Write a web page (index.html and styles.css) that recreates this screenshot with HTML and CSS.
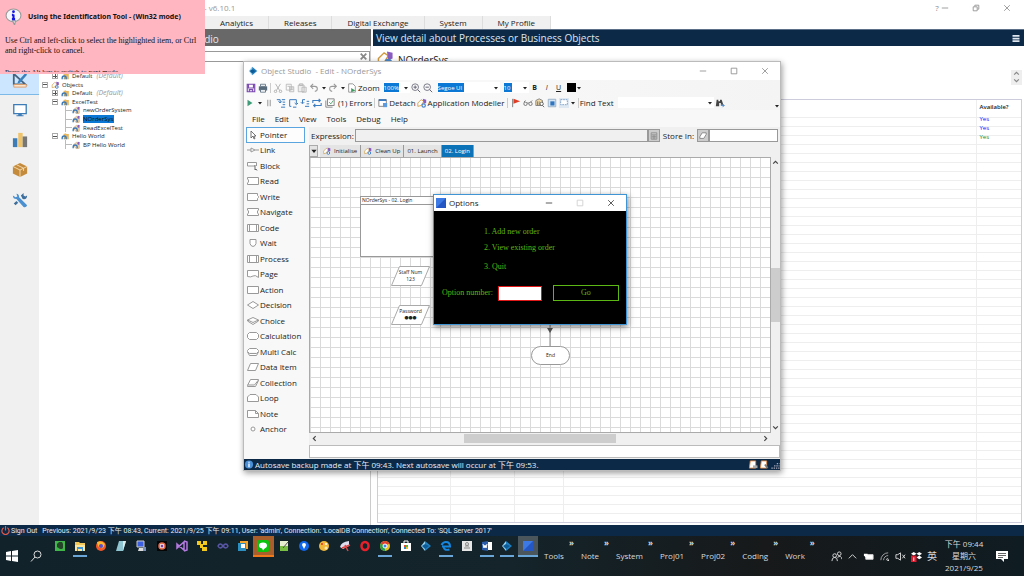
FILE: index.html
```html
<!DOCTYPE html>
<html lang="en">
<head>
    <meta charset="UTF-8">
    <meta name="viewport" content="width=device-width, initial-scale=1.0">
    <title>Object Studio - Edit - NOrderSys</title>
    <link rel="stylesheet" href="styles.css">
</head>
<body>
    <!-- shared icons -->
    <svg class="defs" width="0" height="0">
        <symbol id="prism" viewBox="0 0 12 12"><path d="M1 6 5 1v10z" fill="#8fd0f0"/><path d="M5 1l6 5-6 5z" fill="#1f7fc0"/><path d="M5 4l4 2-4 3-3-3z" fill="#0d5a94"/></symbol>
        <symbol id="gears" viewBox="0 0 12 12"><path d="M1 6l4-4 3 2-3 5-4 1z" fill="#fff" stroke="#d09a3c"/><path d="M7 1l4 1v4L8 7z" fill="#8a5cc0"/><circle cx="8" cy="9" r="2" fill="#fff" stroke="#4a86c8" stroke-width="1.5"/></symbol>
        <symbol id="folder" viewBox="0 0 12 12"><path d="M3 3l4-1v1h4v8H4z" fill="#e8b860"/><path d="M1 11V9q0-3 3-3t3 3v2" fill="none" stroke="#3878b8" stroke-width="2"/><path d="M4 8v3" stroke="#3878b8"/></symbol>
        <symbol id="leaf" viewBox="0 0 12 12"><path d="M1 6l5-4 4 2v7H5z" fill="#f2dcb4" stroke="#c8a070"/><path d="M8 1l3 1-1 4-3-1z" fill="#8a5cc0"/><path d="M1 11V9q0-3 3-3t3 3v2" fill="none" stroke="#3878b8" stroke-width="2"/></symbol>
        <symbol id="min" viewBox="0 0 10 10"><path d="M1 5h8" stroke="currentColor" fill="none"/></symbol>
        <symbol id="max" viewBox="0 0 10 10"><path d="M1.500 1.500h7v7h-7z" stroke="currentColor" fill="none"/></symbol>
        <symbol id="close" viewBox="0 0 10 10"><path d="M1.500 1.500l7 7m0-7l-7 7" stroke="currentColor" fill="none"/></symbol>
        <symbol id="down" viewBox="0 0 6 6"><path d="M1 2h4L3 4.500z" fill="currentColor"/></symbol>
    </svg>

    <main class="app">
        <header class="app-title">
            <span>Blue Prism - v6.10.1</span>
            <div class="win-buttons">
                <button class="help">?</button>
                <button aria-label="Minimise"><svg><use href="#min"/></svg></button>
                <button aria-label="Restore"><svg viewBox="0 0 10 10"><path d="M1.500 3.500h5v5h-5zM3.500 3V1.500h5v5H7" fill="none" stroke="currentColor"/></svg></button>
                <button aria-label="Close"><svg><use href="#close"/></svg></button>
            </div>
        </header>
        <nav class="app-tabs">
            <a href="#">Analytics</a>
            <a href="#">Releases</a>
            <a href="#">Digital Exchange</a>
            <a href="#">System</a>
            <a href="#">My Profile</a>
        </nav>
        <div class="app-main">
            <section class="left">
                <h2>Studio</h2>
                <div class="left-body">
                    <nav class="sidebar">
                        <a href="#" class="on" aria-label="Studio"><svg viewBox="0 0 18 18"><path d="M2 2v12h13z" fill="none" stroke="#46627c" stroke-width="2"/><path d="M15 1l2 2-8 9-3 1 1-3z" fill="#3a80bd"/><path d="M2 14h14v3H2z" fill="#fbe3cc" stroke="#dc9a66"/></svg></a>
                        <a href="#" aria-label="Control"><svg viewBox="0 0 18 18"><path d="M2 3h14v10H2z" fill="#fff" stroke="#3e7cb8" stroke-width="1.500"/><path d="M7 13h4v2h2v1H5v-1h2z" fill="#3e7cb8"/></svg></a>
                        <a href="#" aria-label="Analytics"><svg viewBox="0 0 18 18"><path d="M1 7h5v10H1z" fill="#3e7cb8"/><path d="M7 1h5v16H7z" fill="#efc36a"/><path d="M12 5h5v12h-5z" fill="#777"/></svg></a>
                        <a href="#" aria-label="Releases"><svg viewBox="0 0 18 18"><path d="M1 5l8-4 8 4v8l-8 4-8-4z" fill="#c58b3c"/><path d="M1 5l8 4 8-4M9 9v8M5 3l8 4v3" fill="none" stroke="#f6e0b8"/></svg></a>
                        <a href="#" aria-label="System"><svg viewBox="0 0 18 18"><path d="M1 4q0 4 4 4l8 9q3 1 4-2L8 6q0-4-3-4l1 3-2 1z" fill="#4a90d0"/><path d="M12 8l-2-4 3-3v3l2 1 2-1q0 5-5 4" fill="#3e6f9c"/><path d="M2 13l3-3 2 2-3 3z" fill="#3e6f9c"/></svg></a>
                    </nav>
                    <div class="explorer">
                        <div class="search">
                            <input type="text" aria-label="Search">
                            <button aria-label="Clear"><svg viewBox="0 0 10 10"><path d="M1 1l8 8m0-8L1 9" stroke="#888" stroke-width="2.500"/></svg></button>
                        </div>
                        <ul class="tree">
                            <li class="l1"><i class="box plus"></i><svg><use href="#folder"/></svg>Default <em>(Default)</em></li>
                            <li class="l0"><i class="box"></i><svg><use href="#gears"/></svg>Objects</li>
                            <li class="l1"><i class="box plus"></i><svg><use href="#folder"/></svg>Default <em>(Default)</em></li>
                            <li class="l1"><i class="box"></i><svg><use href="#folder"/></svg>ExcelTest</li>
                            <li class="l2"><svg><use href="#leaf"/></svg>newOrderSystem</li>
                            <li class="l2"><svg><use href="#leaf"/></svg><mark>NOrderSys</mark></li>
                            <li class="l2"><svg><use href="#leaf"/></svg>ReadExcelTest</li>
                            <li class="l1"><i class="box"></i><svg><use href="#folder"/></svg>Hello World</li>
                            <li class="l2"><svg><use href="#leaf"/></svg>BP Hello World</li>
                        </ul>
                    </div>
                </div>
            </section>
            <section class="right">
                <h2>View detail about Processes or Business Objects
                    <button aria-label="Menu"><svg viewBox="0 0 8 8"><path d="M0 1h8M0 4h8M0 7h8" stroke="#dfe6ee" stroke-width="2"/></svg></button>
                </h2>
                <div class="detail-head">
                    <svg><use href="#gears"/></svg>
                    <span>NOrderSys</span>
                    <div class="spin"><button aria-label="Up"><svg viewBox="0 0 6 6"><path d="M1 4l2-2 2 2" fill="none" stroke="#888"/></svg></button><button aria-label="Down"><svg viewBox="0 0 6 6"><path d="M1 2l2 2 2-2" fill="none" stroke="#888"/></svg></button></div>
                </div>
                <div class="detail-table">
                    <table>
                        <thead><tr><th class="c1"></th><th class="c2"></th><th class="c3"></th><th></th><th class="c5">Available?</th></tr></thead>
                        <tbody>
                            <tr><td></td><td></td><td></td><td></td><td class="blue">Yes</td></tr>
                            <tr><td></td><td></td><td></td><td></td><td class="blue">Yes</td></tr>
                            <tr><td></td><td></td><td></td><td></td><td class="green">Yes</td></tr>
                            <tr class="rest"><td></td><td></td><td></td><td></td><td></td></tr>
                        </tbody>
                    </table>
                </div>
            </section>
        </div>
    </main>

    <footer class="app-status">
        <svg viewBox="0 0 10 10"><path d="M3 2a4 4 0 1 0 4 0M5 0v5" fill="none" stroke="#e05a48" stroke-width="1.300"/></svg>
        <a href="#">Sign Out</a>
        <span>Previous: 2021/9/23 下午 08:43, Current: 2021/9/25 下午 09:11, User: 'admin', Connection: 'LocalDB Connection', Connected To: 'SQL Server 2017'</span>
    </footer>

    <footer class="taskbar">
        <button class="start" aria-label="Start"><svg viewBox="0 0 12 12"><path d="M0 2l5-1v4.500H0zM6 1l6-1v5.500H6zM0 6.500h5V11l-5-1zM6 6.500h6V12l-6-1z" fill="#fff"/></svg></button>
        <button class="find" aria-label="Search"><svg viewBox="0 0 12 12"><circle cx="7.500" cy="4.500" r="3.500" fill="none" stroke="#ddd"/><path d="M5 7l-4 4.500" stroke="#ddd"/></svg></button>
        <div class="apps">
            <button aria-label="Evernote"><svg viewBox="0 0 12 12"><path d="M1 1h10v10H1z" fill="#3fb54a"/><path d="M3 4l2-2h3l1 2v4L8 9H6L3 7z" fill="#26432a"/></svg></button>
            <button class="run" aria-label="Explorer"><svg viewBox="0 0 12 12"><path d="M1 2h4l1 1h5v8H1z" fill="#f2c85a"/><path d="M1 5h10v6H1z" fill="#fbe6a0"/><path d="M3 7h6v4H8V9H4v2H3z" fill="#3f94d4"/></svg></button>
            <button aria-label="Firefox"><svg viewBox="0 0 12 12"><circle cx="6" cy="6" r="5" fill="#f4572a"/><path d="M2 2q5-2 8 2l-2 4q-3 1-5-2z" fill="#ffb52e"/><circle cx="6" cy="6" r="2" fill="#5a4fd0"/></svg></button>
            <button aria-label="Notepad"><svg viewBox="0 0 12 12"><path d="M4 1h7L8 11H1z" fill="#8fc5d0"/><path d="M8 1h3L8 11z" fill="#dfeaea"/></svg></button>
            <button aria-label="Remote"><svg viewBox="0 0 12 12"><path d="M2 1h7v6H2z" fill="#3c5ee0" stroke="#ccc"/><path d="M4 8h5l2 3H3z" fill="#ddd"/><path d="M8 7h3v4H8z" fill="#7890b8"/></svg></button>
            <button aria-label="Camera"><svg viewBox="0 0 12 12"><path d="M1 1h10v10H1z" fill="#050505"/><circle cx="6" cy="6" r="3" fill="#fff" stroke="#e06a48" stroke-width="1.500"/><circle cx="6" cy="6" r="1.500" fill="#8040a0"/></svg></button>
            <button aria-label="Visual Studio"><svg viewBox="0 0 12 12"><path d="M1 4l7 6V2L1 8zM8 1l3 1v8l-3 1" fill="none" stroke="#b47ae0" stroke-width="1.500"/></svg></button>
            <button aria-label="Yellow app"><svg viewBox="0 0 12 12"><path d="M1 1h4v3h2V1h4v4H7v2h4v4H6V8H4V5H1z" fill="#f3c81e"/></svg></button>
            <button aria-label="Infinity app"><svg viewBox="0 0 12 12"><path d="M6 6Q3 2 1 6q2 4 5 0 3-4 5 0-2 4-5 0" fill="none" stroke="#5a57a8" stroke-width="1.500"/></svg></button>
            <button aria-label="VMware"><svg viewBox="0 0 12 12"><path d="M3 1h8v8H3z" fill="#f3a52c"/><path d="M1 3h8v8H1z" fill="#2d8fc0"/><path d="M4 4h4v4H4z" fill="#fff"/></svg></button>
            <button class="alert" aria-label="LINE"><svg viewBox="0 0 12 12"><rect x="0" y="0" width="12" height="12" rx="2" fill="#0cc20c"/><ellipse cx="6" cy="5.500" rx="4" ry="3" fill="#fff"/><path d="M5 8h3l-2 2.500z" fill="#fff"/></svg></button>
            <button aria-label="Notepad++"><svg viewBox="0 0 12 12"><path d="M2 1h8v10H2z" fill="#e6efcf"/><path d="M2 6h8v5H2z" fill="#78c043"/><path d="M5 8l5-6" stroke="#555"/></svg></button>
            <button aria-label="Map"><svg viewBox="0 0 12 12"><circle cx="6" cy="6" r="5" fill="#1166ee"/><path d="M6 3q2 0 2 2L6 9 4 5q0-2 2-2" fill="#fff"/></svg></button>
            <button aria-label="Paint"><svg viewBox="0 0 12 12"><circle cx="6" cy="6" r="5" fill="#f0b83a"/><circle cx="4" cy="4" r="1" fill="#d33"/><circle cx="8" cy="4" r="1" fill="#fff"/><circle cx="8" cy="8" r="1.500" fill="#fbe8b0"/></svg></button>
            <button aria-label="Snip"><svg viewBox="0 0 12 12"><path d="M1 7q1-5 9-6v5l-6 3z" fill="#dde"/><path d="M3 8l8-3M6 5l3 6" stroke="#d44" stroke-width="1.500"/></svg></button>
            <button aria-label="Opera"><svg viewBox="0 0 12 12"><ellipse cx="6" cy="6" rx="3.500" ry="4" fill="none" stroke="#e8202c" stroke-width="2.500"/></svg></button>
            <button class="run" aria-label="Chrome"><svg viewBox="0 0 12 12"><circle cx="6" cy="6" r="5" fill="#e8c020"/><path d="M6 6L1.700 3.500a5 5 0 0 1 8.600 0z" fill="#e04030"/><path d="M6 6v5A5 5 0 0 1 1.700 3.500z" fill="#2ea04c"/><circle cx="6" cy="6" r="2" fill="#3e82f0" stroke="#fff"/></svg></button>
            <button aria-label="Store"><svg viewBox="0 0 12 12"><path d="M1 3h10v8H1z" fill="#fff"/><path d="M4 3V1h4v2" fill="none" stroke="#fff"/><path d="M4 5h2v2H4z" fill="#e43"/><path d="M6 5h2v2H6z" fill="#5b3"/><path d="M4 7h2v2H4z" fill="#28d"/><path d="M6 7h2v2H6z" fill="#eb2"/></svg></button>
            <button aria-label="Blue Prism"><svg><use href="#prism"/></svg></button>
            <button class="run" aria-label="Edge"><svg viewBox="0 0 12 12"><path d="M2 6.500h8Q10 2 6 2 3 2 1.500 5M3.500 6.500Q4 11 9.500 9.500" fill="none" stroke="#1687e0" stroke-width="2"/></svg></button>
            <button aria-label="Document"><svg viewBox="0 0 12 12"><path d="M1 1h10v10H1z" fill="#e6e6e6"/><circle cx="6" cy="4" r="1.500" fill="none" stroke="#888"/><path d="M3 8h6M4 6h4" stroke="#888"/></svg></button>
            <button class="run" aria-label="Word"><svg viewBox="0 0 12 12"><path d="M6 2h5v8H6z" fill="#fff"/><path d="M1 2l6-1v10l-6-1z" fill="#2a5caa"/><path d="M2 4l1 4 1-3 1 3 1-4" fill="none" stroke="#fff"/></svg></button>
            <button class="run" aria-label="Object Studio"><svg><use href="#prism"/></svg></button>
            <button class="run active" aria-label="Options"><svg viewBox="0 0 12 12"><path d="M1 1h10v10H1z" fill="#3d7ae6"/><path d="M1 11L11 1v10z" fill="#2457c4"/></svg></button>
        </div>
        <div class="bands">
            <a href="#">Tools</a><b>»</b>
            <a href="#">Note</a><b>»</b>
            <a href="#">System</a><b>»</b>
            <a href="#">Proj01</a><b>»</b>
            <a href="#">Proj02</a><b>»</b>
            <a href="#">Coding</a><b>»</b>
            <a href="#">Work</a><b>»</b>
        </div>
        <div class="tray">
            <svg viewBox="0 0 12 12"><circle cx="4" cy="5" r="2" fill="none" stroke="#ddd"/><circle cx="9" cy="3" r="2" fill="none" stroke="#ddd"/><path d="M1 11q0-4 3-4t3 4M7 7q4-3 5 2" fill="none" stroke="#ddd"/></svg>
            <svg viewBox="0 0 12 12"><path d="M2 8l4-4 4 4" fill="none" stroke="#ddd"/></svg>
            <svg viewBox="0 0 12 12"><path d="M3 4h8v5H3z" fill="#fff" stroke="#ddd"/><path d="M1 3h4v2l-2 2-2-2z" fill="#fff"/></svg>
            <svg viewBox="0 0 12 12"><path d="M2 10A8 8 0 0 1 10 2M5 10a5 5 0 0 1 5-5M8 10a2 2 0 0 1 2-2" fill="none" stroke="#aaa"/><circle cx="10" cy="10" r="1" fill="#ddd"/></svg>
            <svg viewBox="0 0 12 12"><path d="M1 4h2l3-2v8L3 8H1zM8 4l3 4m0-4L8 8" fill="none" stroke="#ddd"/></svg>
            <svg viewBox="0 0 12 12"><path d="M3 1l3 2-3 2-3-2zM9 1l3 2-3 2-3-2zM9 5l3 2-3 2-3-2z" fill="#fff"/><path d="M0 5h6v7H0z" fill="#e0182c"/><path d="M3 7v4" stroke="#fff"/></svg>
            <span class="ime">英</span>
        </div>
        <time class="clock">下午 09:44<br>星期六<br>2021/9/25</time>
        <button class="notify" aria-label="Notifications"><svg viewBox="0 0 12 12"><path d="M0 1h12v8H8v3L5 9H0z" fill="#fff"/><path d="M2 3.500h8M2 5.500h8M2 7.500h5" stroke="#222" stroke-width=".7"/></svg></button>
    </footer>

    <!-- Object Studio editor window -->
    <section class="studio">
        <header class="studio-title">
            <svg><use href="#prism"/></svg>
            <span>Object Studio &nbsp;- Edit - NOrderSys</span>
            <div class="win-buttons">
                <button aria-label="Minimise"><svg><use href="#min"/></svg></button>
                <button aria-label="Maximise"><svg><use href="#max"/></svg></button>
                <button aria-label="Close"><svg><use href="#close"/></svg></button>
            </div>
        </header>

        <div class="toolbar bar-one">
            <button aria-label="Save"><svg viewBox="0 0 12 12"><path d="M1.500 1.500h9v9h-9zM3 2v4h6V2M4 10V8h4v2" fill="none" stroke="#7b4ab0" stroke-width="1.400"/></svg></button>
            <button aria-label="Print"><svg viewBox="0 0 12 12"><path d="M1 4h10v5H1z" fill="#566a7c"/><path d="M3 1.500h6V4H3zM3 8h6v3H3z" fill="#fff" stroke="#566a7c"/></svg></button>
            <i class="sep"></i>
            <button aria-label="Cut"><svg viewBox="0 0 12 12"><path d="M3 1l5 8M9 1L4 9" stroke="#aaa"/><circle cx="3" cy="10" r="1.500" fill="none" stroke="#aaa"/><circle cx="9" cy="10" r="1.500" fill="none" stroke="#aaa"/></svg></button>
            <button aria-label="Copy"><svg viewBox="0 0 12 12"><path d="M1.500 1.500h6v7h-6zM5.500 4.500h5v6h-5zM6 6h4M6 8h4M3 4h3" fill="none" stroke="#b5b5b5"/></svg></button>
            <button aria-label="Paste"><svg viewBox="0 0 12 12"><path d="M1.500 2.500h7v8h-7zM3 1h4v2H3zM6 5h5v6H6z" fill="#eee" stroke="#b5b5b5"/></svg></button>
            <button aria-label="Undo"><svg viewBox="0 0 12 12"><path d="M5 1L2 4l3 3M2 4h5q3 0 3 3t-3 3" fill="none" stroke="#999" stroke-width="1.300"/></svg></button>
            <button class="arrow" aria-label="Undo list"><svg><use href="#down"/></svg></button>
            <button aria-label="Redo"><svg viewBox="0 0 12 12"><path d="M7 1l3 3-3 3M10 4H5Q2 4 2 7t3 3" fill="none" stroke="#999" stroke-width="1.300"/></svg></button>
            <button class="arrow" aria-label="Redo list"><svg><use href="#down"/></svg></button>
            <button aria-label="Refresh"><svg viewBox="0 0 12 12"><path d="M2 1h5l3 3v7H2z" fill="#fff" stroke="#888"/><path d="M5 11V6l5 3z" fill="#3e9a60"/></svg></button>
            <label for="zoom" class="big">Zoom</label>
            <span class="combo"><input id="zoom" class="hot w14" type="text" value="100%"><button class="arrow" aria-label="Zoom list"><svg><use href="#down"/></svg></button></span>
            <button aria-label="Zoom in"><svg viewBox="0 0 12 12"><circle cx="5" cy="5" r="4" fill="none" stroke="#667"/><path d="M8 8l3 3M3 5h4M5 3v4" stroke="#667" stroke-width="1.200"/></svg></button>
            <button aria-label="Zoom out"><svg viewBox="0 0 12 12"><circle cx="5" cy="5" r="4" fill="none" stroke="#667"/><path d="M8 8l3 3M3 5h4" stroke="#667" stroke-width="1.200"/></svg></button>
            <span class="combo font"><input class="hot w26" type="text" value="Segoe UI" aria-label="Font"><button class="arrow" aria-label="Font list"><svg><use href="#down"/></svg></button></span>
            <span class="combo size"><input class="hot w8" type="text" value="10" aria-label="Size"><button class="arrow" aria-label="Size list"><svg><use href="#down"/></svg></button></span>
            <button class="fmt"><b>B</b></button>
            <button class="fmt"><i>I</i></button>
            <button class="fmt"><u>U</u></button>
            <button class="swatch" aria-label="Colour"></button>
            <button class="arrow" aria-label="Colour list"><svg><use href="#down"/></svg></button>
        </div>

        <div class="toolbar bar-two">
            <button aria-label="Go"><svg viewBox="0 0 12 12"><path d="M3 2l6 4-6 4z" fill="#3f9c78"/></svg></button>
            <button class="arrow" aria-label="Speed"><svg><use href="#down"/></svg></button>
            <button aria-label="Pause"><svg viewBox="0 0 12 12"><path d="M4.500 2v8M7.500 2v8" stroke="#aaa" stroke-width="1.500"/></svg></button>
            <button aria-label="Step"><svg viewBox="0 0 12 12"><path d="M1 2h4v4M3 4l2 2 2-2M7 2h4M8 5h3M8 8h3M6 11h5" fill="none" stroke="#3c7cc0" stroke-width="1.200"/></svg></button>
            <button aria-label="Step over"><svg viewBox="0 0 12 12"><path d="M6 2H2v8h2M6 2h4v5M8 6l2 2 2-2M6 11h4" fill="none" stroke="#3c7cc0" stroke-width="1.200"/></svg></button>
            <button aria-label="Step out"><svg viewBox="0 0 12 12"><path d="M3 6V2h3M1 5l2 2 2-2M8 4h3M8 7h3M6 10h5" fill="none" stroke="#3c7cc0" stroke-width="1.200"/></svg></button>
            <button aria-label="Reset"><svg viewBox="0 0 12 12"><path d="M1 6V3h9M8 1l2 2-2 2M11 6v3H2M4 7L2 9l2 2" fill="none" stroke="#3c7cc0" stroke-width="1.300"/></svg></button>
            <button class="check" aria-label="Validate"><svg viewBox="0 0 12 12"><path d="M3 1h8v8H3zM1 3v8h8" fill="none" stroke="#777"/><path d="M5 5l2 2 3-4" fill="none" stroke="#3e9a60"/></svg></button>
            <button class="big">(1) Errors</button>
            <i class="sep"></i>
            <button aria-label="Detach window"><svg viewBox="0 0 12 12"><path d="M1 2h9v8H1z" fill="#fff" stroke="#777"/><path d="M1 2.500h9" stroke="#2b72c0" stroke-width="2"/><path d="M6 6h5v5H6z" fill="#5d9be0"/></svg></button>
            <button class="big">Detach</button>
            <button class="model" aria-label="Modeller"><svg><use href="#gears"/></svg></button>
            <button class="big">Application Modeller</button>
            <i class="sep"></i>
            <button aria-label="Breakpoint"><svg viewBox="0 0 12 12"><path d="M2 1v10" stroke="#666"/><path d="M3 1l8 3-8 3z" fill="#e03c24"/></svg></button>
            <button aria-label="Watch"><svg viewBox="0 0 12 12"><circle cx="3" cy="7" r="2" fill="none" stroke="#666"/><circle cx="9" cy="7" r="2" fill="none" stroke="#666"/><path d="M1 5l2-2M9 5l2-2M5 6h2" stroke="#666"/></svg></button>
            <button aria-label="Log"><svg viewBox="0 0 12 12"><path d="M1 3l4-2 4 2v6H1z" fill="#f3dca8" stroke="#777"/><path d="M3 4v5M5 4v5" stroke="#777"/><circle cx="8" cy="7" r="2" fill="#fff" stroke="#555"/><path d="M9 9l2 2" stroke="#555"/></svg></button>
            <button aria-label="Full screen"><svg viewBox="0 0 12 12"><path d="M1.500 1.500h9v9h-9z" fill="#d4e4f4" stroke="#8fa8c0"/><path d="M4 4h5v5H4z" fill="#2f74bc"/></svg></button>
            <button aria-label="Pan"><svg viewBox="0 0 12 12"><path d="M0 0h12v12H0z" fill="#dde8f2"/><path d="M2 2h8v6H2z" fill="#fff" stroke="#6f97c4" stroke-dasharray="2 1"/></svg></button>
            <button class="arrow" aria-label="View list"><svg><use href="#down"/></svg></button>
            <i class="sep thin"></i>
            <label for="find" class="big">Find Text</label>
            <span class="combo find-box"><input id="find" type="text"><button class="arrow" aria-label="Find list"><svg><use href="#down"/></svg></button></span>
            <button aria-label="Find next"><svg viewBox="0 0 12 12"><path d="M2 2h2v2h2V2h2l2 6H7V6H5v4H1z" fill="#444"/><path d="M7 9h4M9 7l2 2-2 2" fill="none" stroke="#3c7cc0"/></svg></button>
            <button class="arrow more" aria-label="More"><svg><use href="#down"/></svg></button>
        </div>

        <nav class="menu">
            <a href="#">File</a><a href="#">Edit</a><a href="#">View</a><a href="#">Tools</a><a href="#">Debug</a><a href="#">Help</a>
        </nav>

        <div class="studio-body">
            <div class="palette">
                <button class="on"><svg viewBox="0 0 12 10"><path d="M4 1v7l2-2 1 3 1-.5L7 6h2z" fill="#fff" stroke="#555" stroke-width=".8"/></svg>Pointer</button>
                <button><svg viewBox="0 0 12 10"><path d="M0 5h4M4 3l4 2-4 2zM8 5h4"/></svg>Link</button>
                <button><svg viewBox="0 0 12 10"><path d="M8 5H.5V1.500h9V5"/><path d="M8 4v5l1-1 1 1.500" stroke="#666"/></svg>Block</button>
                <button><svg viewBox="0 0 12 10"><path d="M.5 1.500h11v7H.5V7l1-1V4l-1-1z"/></svg>Read</button>
                <button><svg viewBox="0 0 12 10"><path d="M.5 1.500h10v2l1 1v1l-1 1v2H.5z"/></svg>Write</button>
                <button><svg viewBox="0 0 12 10"><path d="M.5 1.500h11V3l-1 1v2l1 1v1.500H.5V7l1-1V4l-1-1z"/></svg>Navigate</button>
                <button><svg viewBox="0 0 12 10"><path d="M.5 1.500h11v7H.5zM2.500 1.500v7M9.500 1.500v7"/></svg>Code</button>
                <button><svg viewBox="0 0 12 10"><path d="M3 1.500h6v4Q8.500 8 6 8.500 3.500 8 3 5.500z"/></svg>Wait</button>
                <button><svg viewBox="0 0 12 10"><path d="M.5 1.500h11v7H.5zM2.500 1.500v7M9.500 1.500v7"/></svg>Process</button>
                <button><svg viewBox="0 0 12 10"><path d="M.5 1.500h11v7Q8 5.500 6 7T.5 7.500z"/></svg>Page</button>
                <button><svg viewBox="0 0 12 10"><path d="M.5 1.500h11v7H.5z"/></svg>Action</button>
                <button><svg viewBox="0 0 12 10"><path d="M.5 5L6 1.500 11.500 5 6 8.500z"/></svg>Decision</button>
                <button><svg viewBox="0 0 12 10"><path d="M.5 4L6 1.500 11.500 4v1L6 8.500.5 5zM.5 4L6 6.500 11.500 4"/></svg>Choice</button>
                <button><svg viewBox="0 0 12 10"><path d="M2.500 1.500h7l2 2v3l-2 2h-7l-2-2v-3z"/></svg>Calculation</button>
                <button><svg viewBox="0 0 12 10"><path d="M2.500 1.500h7l2 2v1l-2 2h-7l-2-2v-1zM.5 5l2 3.500h7l2-3.500"/></svg>Multi Calc</button>
                <button><svg viewBox="0 0 12 10"><path d="M3.500 1.500h8l-3 7h-8z"/></svg>Data Item</button>
                <button><svg viewBox="0 0 12 10"><path d="M3.500 1.500h8v1l-3 6h-8v-1zM.5 7h7l4-5"/></svg>Collection</button>
                <button><svg viewBox="0 0 12 10"><path d="M.5 8.500V4L3 1.500h6L11.500 4v4.500z"/></svg>Loop</button>
                <button><svg viewBox="0 0 12 10"><path d="M.5 1.500h8l3 3v4H.5zM8.500 1.500v3h3"/></svg>Note</button>
                <button><svg viewBox="0 0 12 10"><circle cx="6" cy="5" r="2"/></svg>Anchor</button>
            </div>
            <div class="work">
                <div class="expr">
                    <label for="expr">Expression:</label>
                    <input id="expr" class="long" type="text">
                    <button aria-label="Calculator"><svg viewBox="0 0 10 10"><path d="M1.500 1h7v8h-7zM2 3.500h6M2 6h6M4 4v5M6 4v5" fill="none" stroke="#888"/></svg></button>
                    <label for="store" class="store-label">Store In:</label>
                    <button aria-label="Data item"><svg viewBox="0 0 10 10"><path d="M4 1h5v2L6 8H1V6z" fill="#fff" stroke="#777"/></svg></button>
                    <input id="store" class="store" type="text">
                </div>
                <div class="pages">
                    <button class="pick" aria-label="Pages"><svg><use href="#down"/></svg></button>
                    <button><svg><use href="#gears"/></svg>Initialise</button>
                    <button><svg><use href="#gears"/></svg>Clean Up</button>
                    <button>01. Launch</button>
                    <button class="on">02. Login</button>
                </div>
                <div class="canvas-row">
                    <div class="canvas">
                        <div class="info"><p>NOrderSys - 02. Login</p></div>
                        <div class="data staff"><svg viewBox="0 0 39 20"><path d="M8.500.5h30l-8 19H.5z" fill="#fff" stroke="#aaa"/></svg><p>Staff Num<br>123</p></div>
                        <div class="data pass"><svg viewBox="0 0 39 20"><path d="M8.500.5h30l-8 19H.5z" fill="#fff" stroke="#aaa"/></svg><p>Password<br><b>●●●</b></p></div>
                        <svg class="link" viewBox="0 0 6 22"><path d="M3 0v22" stroke="#888"/><path d="M0 4h6L3 9z" fill="#555"/></svg>
                        <div class="end">End</div>
                    </div>
                    <div class="vscroll"><svg viewBox="0 0 6 6"><path d="M1 4l2-2 2 2" fill="none" stroke="#444"/></svg><i></i><svg viewBox="0 0 6 6"><path d="M1 2l2 2 2-2" fill="none" stroke="#444"/></svg></div>
                </div>
                <div class="hscroll"><svg viewBox="0 0 6 6"><path d="M4 1L2 3l2 2" fill="none" stroke="#444"/></svg><i></i><svg viewBox="0 0 6 6"><path d="M2 1l2 2-2 2" fill="none" stroke="#444"/></svg></div>
                <div class="message"></div>
            </div>
        </div>
        <footer class="studio-status">
            <svg viewBox="0 0 10 10"><circle cx="5" cy="5" r="4.500" fill="#4a90d8"/><path d="M5 4v4M5 2v1" stroke="#fff" stroke-width="1.500"/></svg>
            <span>Autosave backup made at 下午 09:43. Next autosave will occur at 下午 09:53.</span>
            <svg viewBox="0 0 10 10"><path d="M2 1h6v8H1z" fill="#fff" stroke="#e08a4a"/><path d="M5 6h5v3H5z" fill="#aaa"/></svg>
            <svg viewBox="0 0 10 10"><path d="M2 1h6v8H1z" fill="#fff" stroke="#e08a4a"/><path d="M6 5l3 4" stroke="#777" stroke-width="2"/></svg>
            <svg class="grip" viewBox="0 0 10 10"><path d="M1 9h9M4 6.500h6M7 4h3" stroke="#aab" stroke-width="1.300" stroke-dasharray="1.500 1"/></svg>
        </footer>
    </section>

    <!-- target application -->
    <form class="options">
        <header>
            <svg viewBox="0 0 10 10"><path d="M0 0h10v10H0z" fill="#3d7ae6"/><path d="M0 10L10 0v10z" fill="#2457c4"/></svg>
            <span>Options</span>
            <div class="win-buttons">
                <button type="button" aria-label="Minimise"><svg><use href="#min"/></svg></button>
                <button type="button" aria-label="Maximise" disabled><svg><use href="#max"/></svg></button>
                <button type="button" aria-label="Close"><svg><use href="#close"/></svg></button>
            </div>
        </header>
        <div class="options-body">
            <p>1. Add new order</p>
            <p>2. View existing order</p>
            <p class="quit">3. Quit</p>
            <div class="choice">
                <label for="opt">Option number:</label>
                <input id="opt" type="text">
                <button type="button">Go</button>
            </div>
        </div>
    </form>

    <!-- identification hint -->
    <aside class="hint">
        <h1><svg viewBox="0 0 16 16"><ellipse cx="8" cy="7" rx="7" ry="6" fill="#f4f6fa" stroke="#999"/><path d="M7 12l2 4 1-4z" fill="#eee" stroke="#999"/><path d="M8 6v5M6.500 6.500H8M6.500 10.500h3" stroke="#1515e0" stroke-width="2"/><circle cx="8" cy="3.500" r="1.300" fill="#1515e0"/></svg>Using the Identification Tool - (Win32 mode)</h1>
        <p>Use Ctrl and left-click to select the highlighted item, or Ctrl<br>and right-click to cancel.</p>
        <p class="cut">Press the Alt key to switch to next mode.</p>
    </aside>
</body>
</html>
```
FILE: styles.css
```css
* {
    box-sizing: border-box;
}
body {
    font-family: 'Open Sans', 'Noto Sans CJK TC', sans-serif;
    font-size: 7px;
    line-height: 10px;
    margin: 0;
    height: 100vh;
    overflow: hidden;
    display: flex;
    flex-direction: column;
    color: #222;
    background: #fff;
}
.defs {
    position: absolute;
}
h1, h2, p, ul {
    margin: 0;
    padding: 0;
    font-weight: normal;
}
a {
    color: inherit;
    text-decoration: none;
}
button, input {
    font: inherit;
    color: inherit;
    margin: 0;
    padding: 0;
    border: none;
    background: none;
    border-radius: 0;
    outline: none;
    min-width: 0;
}
button {
    display: flex;
    align-items: center;
    justify-content: center;
}
svg {
    width: 10px;
    height: 10px;
    flex: none;
    display: block;
}
.win-buttons {
    display: flex;
    margin-left: auto;
    color: #888;
}
.win-buttons button {
    width: 31px;
}
.win-buttons svg {
    width: 8px;
    height: 8px;
}

/* main window */
.app {
    flex: 1;
    min-height: 0;
    display: flex;
    flex-direction: column;
}
.app-title {
    display: flex;
    height: 16px;
    align-items: center;
    padding-left: 162px;
    font-size: 8px;
    color: #999;
}
.app-title .win-buttons {
    padding-right: 2px;
}
.app-title .win-buttons .help {
    width: 8px;
    margin-right: -12px;
}
.app-tabs {
    display: flex;
    height: 13px;
    padding-left: 205px;
}
.app-tabs a {
    background: #f0f0f0;
    border-right: 1px solid #ddd;
    padding: 0 15px;
    font-size: 8px;
    line-height: 13px;
}
.app-main {
    flex: 1;
    min-height: 0;
    display: flex;
    gap: 2px;
}
.left {
    width: 371px;
    display: flex;
    flex-direction: column;
}
.left h2, .right h2 {
    height: 17px;
    line-height: 21px;
    font-size: 10px;
    color: #e8e8e8;
    background: #686868;
}
.left h2 {
    padding-left: 189px;
}
.left-body {
    flex: 1;
    display: flex;
}
.sidebar {
    width: 39px;
    background: #f0f0f0;
    padding-top: 19px;
}
.sidebar a {
    display: flex;
    height: 30px;
    align-items: center;
    justify-content: center;
}
.sidebar .on {
    background: #cce6ff;
    border-bottom: 1px solid #7cb8e8;
}
.sidebar svg {
    width: 16px;
    height: 16px;
}
.explorer {
    flex: 1;
    border-right: 1px solid #ccc;
}
.search {
    display: flex;
    height: 11px;
    margin-top: 5px;
    border: 1px solid #999;
}
.search input {
    flex: 1;
}
.search button {
    width: 12px;
}
.search svg {
    width: 7px;
    height: 7px;
}
.tree {
    list-style: none;
    display: grid;
    grid-auto-rows: 1fr;
    height: 77px;
    margin-top: 10px;
    font-size: 6px;
}
.tree li {
    display: flex;
    align-items: center;
    min-height: 0;
    line-height: 8px;
    white-space: nowrap;
}
.tree svg {
    width: 9px;
    height: 8px;
    margin-right: 2px;
}
.tree em {
    font-size: 7px;
    color: #999;
    margin-left: 4px;
}
.tree mark {
    background: #0a78d4;
    color: #111;
    padding-right: 1px;
}
.tree .l0 {
    padding-left: 3px;
}
.tree .l1 {
    padding-left: 13px;
}
.tree .l2 {
    padding-left: 26px;
}
.tree .l2::before {
    content: '';
    width: 6px;
    height: 9px;
    border-left: 1px solid #bbb;
    background: linear-gradient(#bbb, #bbb) center / 100% 1px no-repeat;
}
.box {
    width: 6px;
    height: 6px;
    margin-right: 3px;
    border: 1px solid #aaa;
    background: linear-gradient(#555, #555) center / 100% 1px no-repeat;
}
.box.plus {
    background: linear-gradient(#555, #555) center / 100% 1px no-repeat, linear-gradient(#555, #555) center / 1px 100% no-repeat;
}
.right {
    flex: 1;
    display: flex;
    flex-direction: column;
}
.right h2 {
    display: flex;
    align-items: center;
    padding: 0 4px 0 3px;
    color: #dde5ee;
    background: #0c2a48;
    border-top: 1px solid #5b7088;
}
.right h2 button {
    margin-left: auto;
}
.right h2 svg {
    width: 8px;
    height: 7px;
}
.detail-head {
    display: flex;
    height: 53px;
    padding: 4px 2px 0 4px;
    font-size: 10px;
}
.detail-head svg {
    width: 17px;
    height: 17px;
}
.detail-head span {
    margin-left: 4px;
    line-height: 20px;
}
.spin {
    margin: 20px 0 0 auto;
    width: 11px;
    height: 15px;
    background: #eee;
}
.detail-head .spin svg {
    width: 7px;
    height: 7px;
}
.spin button {
    width: 11px;
    height: 7px;
}
.detail-table {
    flex: 1;
    margin: 0 2px 2px 4px;
    border: 1px solid #ccd;
    background: repeating-linear-gradient(#fff 0 8px, #eee 8px 9px);
}
.detail-table table {
    width: 100%;
    height: 100%;
    border-collapse: collapse;
    table-layout: fixed;
    font-size: 6px;
    line-height: 8px;
    text-align: left;
}
.detail-table th {
    height: 14px;
    padding: 0;
    background: #fff;
    border-left: 1px solid #eee;
    font-weight: 600;
}
.detail-table td {
    height: 9px;
    padding: 0;
    border-left: 1px solid #eee;
}
.detail-table th, .detail-table td {
    padding-left: 3px;
}
.detail-table tr > :first-child {
    border-left: none;
}
.detail-table .rest td {
    height: auto;
}
.c1 {
    width: 72px;
}
.c2 {
    width: 64px;
}
.c3 {
    width: 49px;
}
.c5 {
    width: 45px;
}
.blue {
    color: #11f;
}
.green {
    color: #1a8a1a;
}
.app-status {
    display: flex;
    align-items: center;
    height: 11px;
    padding-left: 1px;
    gap: 1px;
    font-family: Roboto, 'Noto Sans CJK TC', sans-serif;
    color: #e4eaf0;
    background: #0c2a48;
    white-space: nowrap;
}
.app-status a {
    margin-right: 4px;
}
.app-status svg {
    width: 9px;
    height: 9px;
}

/* taskbar */
.taskbar {
    display: flex;
    height: 40px;
    color: #d8dcde;
    background: linear-gradient(90deg, #11222a, #14242a 50%, #17191a 75%, #0f1c22);
}
.start, .find {
    width: 24px;
}
.find svg, .start svg {
    width: 12px;
    height: 12px;
}
.apps {
    display: flex;
    width: 488px;
    margin-left: 2px;
    height: 21px;
}
.apps button {
    flex: 1;
    border-bottom: 2px solid transparent;
}
.apps .run {
    background: linear-gradient(#6aa6d8, #6aa6d8) bottom / 14px 2px no-repeat border-box;
}
.apps .alert {
    background: #a85f2c;
    border-color: #f07818;
}
.apps .active {
    background: #4a565c;
    border-color: #6aa6d8;
}
.apps svg {
    width: 12px;
    height: 12px;
}
.bands {
    display: flex;
    padding-left: 6px;
    font-size: 8px;
}
.bands a {
    line-height: 40px;
}
.bands b {
    width: 6px;
    margin: 0 6px 0 5px;
    line-height: 13px;
}
.tray {
    display: flex;
    align-items: center;
    gap: 5px;
    margin-left: auto;
}
.tray svg {
    width: 11px;
    height: 11px;
}
.ime {
    font-size: 10px;
}
.clock {
    width: 54px;
    padding-top: 2px;
    font-size: 8px;
    line-height: 12px;
    text-align: center;
}
.notify {
    width: 33px;
    padding-right: 11px;
}
.notify svg {
    width: 12px;
    height: 12px;
}

/* Object Studio */
.studio {
    position: absolute;
    left: 243px;
    right: 243px;
    top: 61px;
    bottom: 105px;
    display: flex;
    flex-direction: column;
    background: #f0f0f0;
    border: 1px solid #bbb;
    box-shadow: 1px 2px 6px rgba(0, 0, 0, 0.4);
}
.studio-title {
    display: flex;
    height: 18px;
    align-items: center;
    padding-left: 4px;
    background: #fff;
    color: #999;
    font-size: 8px;
}
.studio-title span {
    margin-left: 3px;
}
.toolbar {
    display: flex;
    height: 15px;
    align-items: center;
    background: linear-gradient(90deg, #fbfbfb, #f4f4f4);
}
.toolbar button {
    min-width: 12px;
    height: 13px;
}
.toolbar .arrow {
    min-width: 7px;
    width: 7px;
}
.arrow svg {
    width: 6px;
    height: 6px;
}
.toolbar .big {
    font-size: 8px;
    white-space: nowrap;
}
.toolbar .check {
    margin: 0 2px 0 1px;
}
.sep {
    width: 1px;
    height: 10px;
    margin: 0 2px;
    background: #ccc;
}
.bar-one {
    padding-left: 1px;
}
.bar-one .sep, .sep.thin {
    margin: 0 1px;
}
.combo {
    display: flex;
    align-items: center;
    justify-content: space-between;
    width: 26px;
    height: 11px;
    margin-left: 4px;
    background: #fff;
    flex: none;
}
.combo.font {
    width: 62px;
}
.combo.size {
    width: 25px;
}
.combo input {
    height: 9px;
}
.combo .hot {
    background: #0a78d4;
    color: #fff;
    font-size: 6px;
}
.w8 {
    width: 8px;
}
.w14 {
    width: 15px;
}
.w26 {
    width: 26px;
}
.toolbar .swatch {
    min-width: 9px;
    height: 9px;
    margin-left: 2px;
    background: #000;
}
.toolbar .find-box {
    flex: 0 1 96px;
}
.find-box input {
    width: 90%;
}
.toolbar .more {
    margin-left: auto;
    align-items: flex-end;
}
.menu {
    display: flex;
    height: 17px;
    padding-left: 8px;
    gap: 10px;
    font-size: 8px;
    line-height: 17px;
    background: #f8f8f8;
}
.studio-body {
    flex: 1;
    min-height: 0;
    display: flex;
}
.palette {
    width: 65px;
    padding: 0 4px 22px 2px;
    display: grid;
    grid-auto-rows: 1fr;
    background: #f8f8f8;
}
.palette button {
    justify-content: flex-start;
    font-size: 8px;
    gap: 1px;
    border: 1px solid transparent;
    white-space: nowrap;
}
.palette .on {
    border-color: #5aa5e0;
    background: #fdfdfd;
}
.palette svg {
    width: 12px;
    height: 10px;
    fill: #fff;
    stroke: #999;
    stroke-width: 1;
}
.work {
    flex: 1;
    min-width: 0;
    display: flex;
    flex-direction: column;
}
.expr {
    display: flex;
    align-items: center;
    height: 17px;
    padding: 0 2px;
    font-size: 8px;
}
.expr input {
    height: 13px;
    border: 1px solid #999;
}
.expr .long {
    flex: 1;
    margin-left: 1px;
    background: #f0f0f0;
}
.expr .store {
    width: 69px;
    background: #fff;
}
.expr button {
    width: 12px;
    height: 13px;
    background: #ccc;
    border: 1px solid #999;
}
.expr svg {
    width: 8px;
    height: 8px;
}
.store-label {
    margin: 0 3px;
}
.pages {
    display: flex;
    height: 13px;
    padding-top: 1px;
    font-size: 6px;
}
.pages button {
    padding: 0 3px;
    gap: 3px;
    background: #e4e4e4;
    border-right: 1px solid #999;
}
.pages svg {
    width: 8px;
    height: 8px;
}
.pages .pick {
    width: 9px;
    padding: 0;
    margin-right: 2px;
    border: 1px solid #aaa;
}
.pages .on {
    color: #fff;
    background: #0c72b8;
}
.canvas-row {
    flex: 1;
    min-height: 0;
    display: flex;
}
.canvas {
    position: relative;
    flex: 1;
    border: 1px solid #aaa;
    background:
        repeating-linear-gradient(90deg, #dadada 0 1px, transparent 1px 10px),
        repeating-linear-gradient(transparent 0 9px, #dadada 9px 10px),
        #fff;
    font-size: 5px;
    line-height: 7px;
}
.info {
    position: absolute;
    left: 50px;
    top: 38px;
    width: 90px;
    height: 61px;
    background: #fff;
    border: 1px solid #999;
}
.info p {
    height: 8px;
    padding-left: 1px;
    border-bottom: 1px solid #999;
}
.data {
    position: absolute;
    left: 81px;
    width: 39px;
    height: 20px;
    text-align: center;
}
.data svg {
    position: absolute;
    width: 39px;
    height: 20px;
}
.data p {
    position: relative;
    padding-top: 3px;
}
.data b {
    font-size: 4px;
}
.staff {
    top: 108px;
}
.pass {
    top: 147px;
}
.link {
    position: absolute;
    left: 237px;
    top: 166px;
    width: 6px;
    height: 22px;
}
.end {
    position: absolute;
    left: 221px;
    top: 188px;
    width: 39px;
    height: 19px;
    border: 1px solid #999;
    border-radius: 10px;
    background: #fff;
    line-height: 17px;
    text-align: center;
}
.vscroll {
    width: 9px;
    display: flex;
    flex-direction: column;
    align-items: center;
    padding: 2px 0;
}
.vscroll i {
    width: 9px;
    flex: 0 0 20%;
    margin: auto 0;
    background: #cdcdcd;
}
.vscroll svg, .hscroll svg {
    width: 7px;
    height: 7px;
}
.hscroll {
    height: 11px;
    display: flex;
    align-items: center;
    padding: 0 11px 0 2px;
}
.hscroll i {
    height: 9px;
    flex: 0 0 33%;
    margin: 0 auto;
    background: #cdcdcd;
}
.message {
    height: 13px;
    margin: 1px 0;
    background: #fff;
    border: 1px solid #bbb;
}
.studio-status {
    display: flex;
    height: 11px;
    align-items: center;
    gap: 1px;
    color: #e8eef4;
    background: #0c2a48;
    font-size: 8px;
    white-space: nowrap;
}
.studio-status span {
    flex: 1;
}
.studio-status svg {
    width: 10px;
    height: 9px;
}

/* Options window */
.options {
    position: absolute;
    left: 433px;
    top: 194px;
    width: 194px;
    height: 131px;
    display: flex;
    flex-direction: column;
    border: 1px solid #3f94d4;
    box-shadow: 1px 2px 6px rgba(0, 0, 0, 0.5);
    background: #fff;
}
.options header {
    display: flex;
    height: 16px;
    align-items: center;
    padding-left: 2px;
    gap: 3px;
    font-size: 8px;
}
.options .win-buttons {
    color: #333;
}
.options button:disabled {
    color: #ccc;
}
.options-body {
    flex: 1;
    padding: 13px 7px 0 8px;
    background: #000;
    color: #5cb814;
    font-family: 'Liberation Serif', serif;
    font-size: 8px;
    line-height: 16px;
}
.options-body p {
    padding-left: 42px;
}
.options-body .quit {
    margin-top: 3px;
}
.choice {
    display: flex;
    align-items: center;
    justify-content: space-between;
    margin-top: 10px;
}
.choice input {
    width: 44px;
    height: 15px;
    margin-right: 5px;
    background: #fff;
    border: 1px solid #e01818;
}
.choice button {
    width: 66px;
    height: 16px;
    border: 1px solid #5cb814;
}

/* hint */
.hint {
    position: absolute;
    left: 0;
    top: 0;
    width: 205px;
    height: 74px;
    padding: 8px 5px 0;
    background: #ffb6c1;
    color: #111;
    font-family: 'Liberation Serif', serif;
    font-size: 8px;
}
.hint h1 {
    display: flex;
    align-items: center;
    gap: 6px;
    font-family: 'Noto Sans', sans-serif;
    font-size: 7px;
    font-weight: bold;
    white-space: nowrap;
}
.hint h1 svg {
    width: 17px;
    height: 17px;
}
.hint p {
    margin-top: 11px;
    white-space: nowrap;
}
.hint .cut {
    height: 5px;
    font-size: 7px;
    overflow: hidden;
}
```
